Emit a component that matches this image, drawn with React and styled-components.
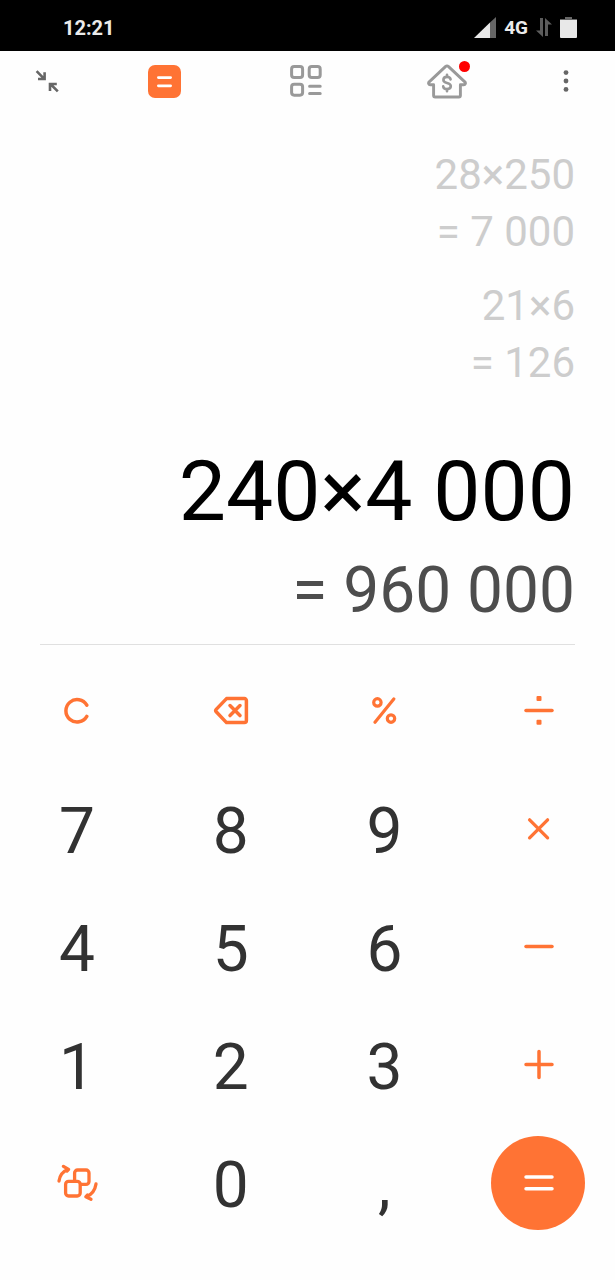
import React from "react";
import styled, { createGlobalStyle } from "styled-components";

const ORANGE = "#ff7334";

const GlobalStyle = createGlobalStyle`
  * { box-sizing: border-box; }
  body {
    margin: 0;
    background: #fefefe;
    font-family: Roboto, "Noto Sans", sans-serif;
  }
  button {
    padding: 0;
    border: 0;
    background: none;
    color: inherit;
    font: inherit;
    cursor: pointer;
  }
  svg { display: block; }
`;

const Page = styled.div`
  display: flex;
  flex-direction: column;
  min-height: 100vh;
  background: #fefefe;
`;

const StatusBar = styled.header`
  display: flex;
  align-items: center;
  justify-content: space-between;
  height: 51px;
  padding: 4px 38px 0 63px;
  background: #000;
  color: #ebebeb;
`;

const Clock = styled.time`
  font-size: 20px;
  font-weight: 700;
  line-height: 24px;
`;

const StatusIcons = styled.div`
  display: flex;
  align-items: center;
  gap: 8px;
`;

const Network = styled.span`
  font-size: 19px;
  font-weight: 700;
  line-height: 24px;
`;

const Toolbar = styled.nav`
  display: grid;
  grid-template-columns: 94px repeat(3, 1fr) 98px;
  height: 60px;
`;

const ToolButton = styled.button`
  display: flex;
  align-items: center;
  justify-content: center;
  color: ${(p) => p.$color};
`;

const AppTile = styled.span`
  display: flex;
  align-items: center;
  justify-content: center;
  width: 33px;
  height: 33px;
  border-radius: 7px;
  background: ${ORANGE};
  color: #fff;
`;

const Badged = styled.span`
  position: relative;
`;

const Badge = styled.span`
  position: absolute;
  top: -2px;
  right: -3px;
  width: 11px;
  height: 11px;
  border-radius: 50%;
  background: #f00;
`;

const Display = styled.main`
  display: flex;
  flex-direction: column;
  margin: 0 40px;
  padding: 35px 0 16px;
  border-bottom: 1px solid #e0e0e0;
  text-align: right;
  white-space: nowrap;
`;

const History = styled.div`
  display: flex;
  flex-direction: column;
  gap: 17px;
  margin-bottom: 52px;
  color: #cdcdcd;
  font-size: 42px;
  line-height: 57px;
`;

const Expression = styled.div`
  color: #000;
  font-size: 84px;
  line-height: 98px;
`;

const Result = styled.output`
  margin-top: 12px;
  color: #4d4d4d;
  font-size: 64px;
  line-height: 75px;
`;

const Keypad = styled.section`
  display: grid;
  grid-template-columns: repeat(4, 1fr);
  grid-auto-rows: 118px;
  margin-top: 7px;
`;

const Key = styled.button`
  display: flex;
  align-items: center;
  justify-content: center;
  color: ${ORANGE};
`;

const DigitKey = styled(Key)`
  padding-top: 4px;
  color: #323232;
  font-size: 64px;
`;

const EqualsDisc = styled.span`
  display: flex;
  align-items: center;
  justify-content: center;
  width: 94px;
  height: 94px;
  border-radius: 50%;
  background: ${ORANGE};
  color: #fff;
`;

const Icon = ({ w, h = w, sw = 3.5, children }) => (
  <svg
    width={w}
    height={h}
    viewBox={`0 0 ${w} ${h}`}
    fill="none"
    stroke="currentColor"
    strokeWidth={sw}
    strokeLinecap="round"
    strokeLinejoin="round"
    aria-hidden="true"
  >
    {children}
  </svg>
);

const icons = {
  clear: (
    <Icon w={28}>
      <path d="M23.8 8.2A11.2 11.2 0 1 0 23.8 19.4" />
    </Icon>
  ),
  backspace: (
    <Icon w={36} h={30}>
      <path d="M13.5 2.6H31.4a2 2 0 0 1 2 2V24.6a2 2 0 0 1-2 2H13.5L3.2 15.8a1.8 1.8 0 0 1 0-2.4Z" />
      <path d="M17 9.6l10 10M27 9.6l-10 10" />
    </Icon>
  ),
  percent: (
    <Icon w={28} sw={3.2}>
      <circle cx="7.4" cy="5.4" r="3.7" />
      <circle cx="21" cy="21.6" r="3.7" />
      <path d="M23.8 1.9L5 25.2" />
    </Icon>
  ),
  divide: (
    <Icon w={32}>
      <path d="M4 15.4H30" />
      <rect x="14.5" y="1" width="5" height="5" rx="1" fill="currentColor" stroke="none" />
      <rect x="14.5" y="24.8" width="5" height="5" rx="1" fill="currentColor" stroke="none" />
    </Icon>
  ),
  times: (
    <Icon w={24} sw={3.3}>
      <path d="M3.6 2.8L21.6 20.8M21.6 2.8L3.6 20.8" />
    </Icon>
  ),
  minus: (
    <Icon w={32}>
      <path d="M4 15.4H30" />
    </Icon>
  ),
  plus: (
    <Icon w={32}>
      <path d="M4 15.4H30M17 2.4V28.4" />
    </Icon>
  ),
  convert: (
    <Icon w={44} h={40} sw={3.3}>
      <rect x="19.6" y="7" width="14.4" height="14.4" rx="3" />
      <rect x="10.6" y="18.4" width="14.6" height="14.6" rx="3" fill="#fefefe" />
      <path d="M4 18C4.8 12.6 7.8 8.6 12.6 6.6M8.4 3.4L13.6 6.4L12 8" />
      <path d="M41 21C40 27.4 36.6 31.4 31.8 33.6M36 36.2L30.8 33.8L32.4 32" />
    </Icon>
  ),
};

const Equals = () => (
  <Icon w={32}>
    <path d="M4 10H30M4 21.8H30" />
  </Icon>
);

const keys = [
  { label: "Clear", icon: "clear" },
  { label: "Backspace", icon: "backspace" },
  { label: "Percent", icon: "percent" },
  { label: "Divide", icon: "divide" },
  { digit: "7" },
  { digit: "8" },
  { digit: "9" },
  { label: "Multiply", icon: "times" },
  { digit: "4" },
  { digit: "5" },
  { digit: "6" },
  { label: "Subtract", icon: "minus" },
  { digit: "1" },
  { digit: "2" },
  { digit: "3" },
  { label: "Add", icon: "plus" },
  { label: "Convert", icon: "convert" },
  { digit: "0" },
  { digit: "," },
];

const history = [
  { expression: "28×250", result: "= 7 000" },
  { expression: "21×6", result: "= 126" },
];

export default function App() {
  return (
    <Page>
      <GlobalStyle />
      <StatusBar>
        <Clock>12:21</Clock>
        <StatusIcons>
          <svg width="22" height="22" viewBox="0 0 22 22" aria-hidden="true">
            <path d="M0 21L16 5.5V21Z" fill="#e8e8e8" />
            <path d="M16 5.5L22 0V21H16Z" fill="#666" />
          </svg>
          <Network>4G</Network>
          <svg width="16" height="19" viewBox="0 0 16 19" fill="#5c5c5c" aria-hidden="true">
            <path d="M4 0H7V19L0 12.5H4Z" />
            <path d="M9 0L16 6.5H12V18H9Z" />
          </svg>
          <svg width="17" height="22" viewBox="0 0 17 22" aria-hidden="true">
            <path d="M5 0H12V2H17V4H0V2H5Z" fill="#666" />
            <path d="M0 3H17V20a1 1 0 0 1-1 1H1a1 1 0 0 1-1-1Z" fill="#e8e8e8" />
          </svg>
        </StatusIcons>
      </StatusBar>

      <Toolbar>
        <ToolButton $color="#666" aria-label="Shrink window">
          <Icon w={24} sw={2.6}>
            <g strokeLinecap="butt" strokeLinejoin="miter">
              <path d="M1.6 2.2L9 9.6M3 10H9.6V3.2" />
              <path d="M22.8 22.4L15.4 15M21.8 15H15V22" />
            </g>
          </Icon>
        </ToolButton>
        <ToolButton $color={ORANGE} aria-label="Calculator">
          <AppTile>
            <Icon w={17} sw={2.8}>
              <path d="M2.4 4.6H14.6M2.4 12.8H14.6" />
            </Icon>
          </AppTile>
        </ToolButton>
        <ToolButton $color="#999" aria-label="Converters">
          <Icon w={34} sw={3}>
            <rect x="2.6" y="2.6" width="11" height="11" rx="2.6" />
            <rect x="20.2" y="2.6" width="11" height="11" rx="2.6" />
            <rect x="2.6" y="20.2" width="11" height="11" rx="2.6" />
            <path d="M20.6 22.2H31.2M20.6 29.6H31.2" />
          </Icon>
        </ToolButton>
        <ToolButton $color="#999" aria-label="Mortgage">
          <Badged>
            <Icon w={40} h={36} sw={2.9}>
              <path d="M18.7 3.4a1.8 1.8 0 0 1 2.6 0L37.8 18.9C39 20.1 38.3 21.7 36.8 21.7H33.4V32.4a1.6 1.6 0 0 1-1.6 1.6H8.2a1.6 1.6 0 0 1-1.6-1.6V21.7H3.2C1.7 21.7 1 20.1 2.2 18.9Z" />
              <path d="M23.6 16.4C23.2 14.6 21.8 13.9 20 13.9C17.8 13.9 16.4 15.1 16.4 17C16.4 21 23.8 18.8 23.8 23C23.8 24.9 22.2 26.1 20 26.1C17.9 26.1 16.5 25.1 16.2 23.4M20 11.8V13.6M20 26.4V28.2" strokeWidth="2.6" />
            </Icon>
            <Badge />
          </Badged>
        </ToolButton>
        <ToolButton $color="#666" aria-label="More options">
          <svg width="6" height="22" viewBox="0 0 6 22" fill="currentColor" aria-hidden="true">
            <circle cx="3" cy="2.6" r="2.4" />
            <circle cx="3" cy="11" r="2.4" />
            <circle cx="3" cy="19.4" r="2.4" />
          </svg>
        </ToolButton>
      </Toolbar>

      <Display>
        <History>
          {history.map((entry) => (
            <div key={entry.expression}>
              <div>{entry.expression}</div>
              <div>{entry.result}</div>
            </div>
          ))}
        </History>
        <Expression>240×4 000</Expression>
        <Result>= 960 000</Result>
      </Display>

      <Keypad>
        {keys.map((key) =>
          key.digit ? (
            <DigitKey key={key.digit}>{key.digit}</DigitKey>
          ) : (
            <Key key={key.label} aria-label={key.label}>
              {icons[key.icon]}
            </Key>
          )
        )}
        <Key aria-label="Equals">
          <EqualsDisc>
            <Equals />
          </EqualsDisc>
        </Key>
      </Keypad>
    </Page>
  );
}
